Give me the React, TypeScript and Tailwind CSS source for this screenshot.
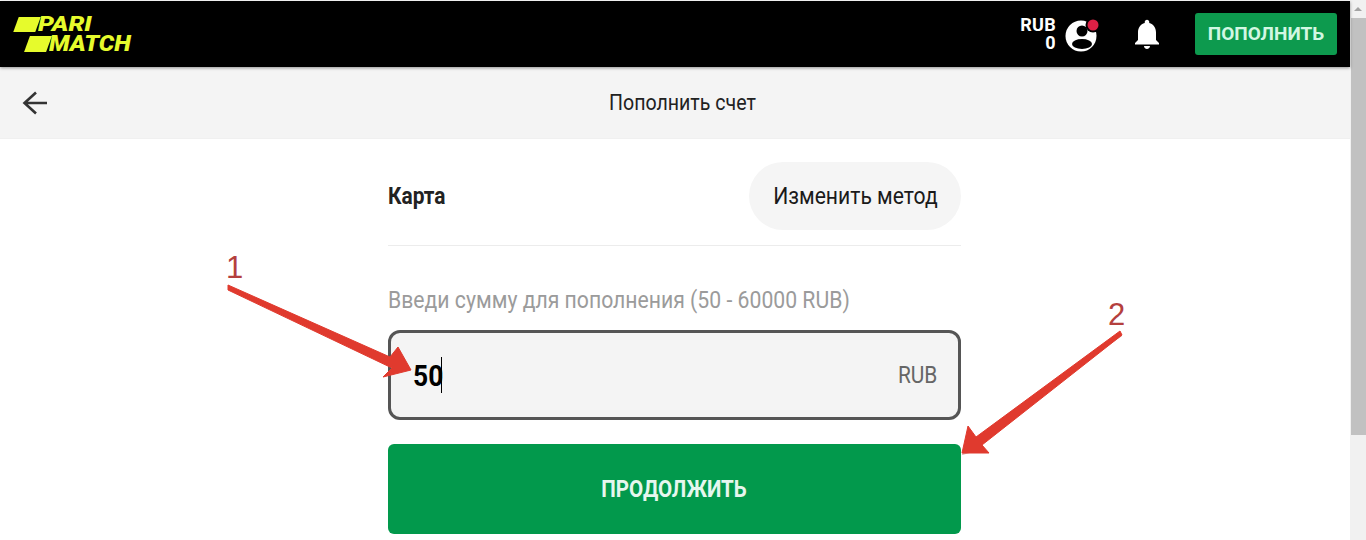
import React from 'react';

const font = { fontFamily: 'Roboto, "Liberation Sans", sans-serif' };

function Logo() {
  return (
    <div className="ml-[3px] flex w-[120px] flex-col gap-[4px] text-[#e6fb2c] italic font-black">
      <div className="flex h-[15px] items-center">
        <div className="h-[15px] w-[22px] shrink-0 -skew-x-[20deg] bg-[#e6fb2c]" />
        <span className="block origin-left scale-x-[1.2] text-[21px] leading-[15px]">PARI</span>
      </div>
      <div className="ml-[11px] flex h-[16px] items-center">
        <div className="h-[16px] w-[22px] shrink-0 -skew-x-[20deg] bg-[#e6fb2c]" />
        <span className="block origin-left scale-x-[1.1] text-[22px] leading-[16px]">MATCH</span>
      </div>
    </div>
  );
}

function UserIcon() {
  return (
    <svg width="36" height="36" viewBox="0 0 36 36" className="shrink-0">
      <circle cx="16" cy="20" r="15.5" fill="#fff" />
      <circle cx="17" cy="15" r="5.5" fill="#000" />
      <ellipse cx="17" cy="28" rx="10" ry="5" fill="#000" />
      <circle cx="28" cy="9" r="7.5" fill="#000" />
      <circle cx="28" cy="9" r="5.5" fill="#dc2045" />
    </svg>
  );
}

function BellIcon() {
  return (
    <svg width="36" height="36" viewBox="0 0 24 24" fill="#fff" className="shrink-0">
      <path d="M12 22c1.1 0 2-.9 2-2h-4c0 1.1.89 2 2 2zm6-6v-5c0-3.07-1.64-5.64-4.5-6.32V4c0-.83-.67-1.5-1.5-1.5s-1.5.67-1.5 1.5v.68C7.63 5.36 6 7.92 6 11v5l-2 2v1h16v-1l-2-2z" />
    </svg>
  );
}

function Scrollbar() {
  return (
    <div className="flex h-full w-4 shrink-0 flex-col bg-[#f1f1f1]">
      <div className="flex h-[18px] items-center justify-center">
        <div className="h-0 w-0 border-x-[4px] border-b-[4px] border-x-transparent border-b-[#a3a3a3]" />
      </div>
      <div className="mx-auto h-[417px] w-[15px] bg-[#c1c1c1]" />
    </div>
  );
}

export default function App() {
  return (
    <div className="relative flex h-[540px] w-[1366px] overflow-hidden bg-white" style={font}>
      <div className="flex min-w-0 flex-1 flex-col">
        {/* шапка */}
        <header className="relative z-10 mt-px flex h-[66px] shrink-0 items-center bg-black pl-[13px] pr-[13px] shadow-[0_1px_3px_rgba(0,0,0,0.4)]">
          <Logo />
          <div className="ml-auto flex flex-col items-end text-[18px] font-bold leading-[18px] tracking-[0.3px] text-white">
            <span>RUB</span>
            <span>0</span>
          </div>
          <div className="ml-[9px]">
            <UserIcon />
          </div>
          <div className="ml-[28px]">
            <BellIcon />
          </div>
          <button className="ml-[30px] flex h-[42px] w-[142px] items-center justify-center rounded-[3px] bg-[#0d9a4e] text-[19px] font-bold text-[#d2f7e2]">
            ПОПОЛНИТЬ
          </button>
        </header>

        {/* заголовок страницы */}
        <div className="flex h-[72px] shrink-0 items-center border-b border-[#f0f0f0] bg-[#f4f4f4] pl-[22px]">
          <svg width="26" height="24" viewBox="0 0 26 24" fill="none" stroke="#333" strokeWidth="2.6" className="shrink-0">
            <path d="M25 12H3M14 1.5 2.5 12 14 22.5" />
          </svg>
          <h1 className="ml-[561px] origin-left scale-x-[0.89] whitespace-nowrap text-[22px] font-normal text-[#222]">Пополнить счет</h1>
        </div>

        <main className="ml-[388px] flex w-[573px] flex-col">
          <div className="flex items-center justify-between border-b border-[#ececec] pb-[15px] pt-[23px]">
            <span className="origin-left scale-x-[0.87] text-[24px] font-bold text-[#222]">Карта</span>
            <button className="flex h-[68px] w-[212px] items-center justify-center rounded-full bg-[#f5f5f5] text-[24px] text-[#1a1a1a]">
              <span className="scale-x-[0.88] whitespace-nowrap">Изменить метод</span>
            </button>
          </div>

          <label className="mt-[39px] origin-left scale-x-[0.883] whitespace-nowrap text-[24px] leading-[30px] text-[#9b9b9b]">
            Введи сумму для пополнения (50 - 60000 RUB)
          </label>

          <div className="mt-[15px] flex h-[90px] items-center rounded-[12px] border-[3px] border-[#555] bg-[#f4f4f4] pl-[22px] pr-[21px]">
            <span className="w-[28px] origin-left scale-x-[0.88] whitespace-nowrap text-[30px] font-bold text-black">50</span>
            <span className="h-[36px] w-px bg-black" />
            <span className="ml-auto origin-right scale-x-[0.87] text-[24px] text-[#666]">RUB</span>
          </div>

          <button className="mt-[24px] flex h-[90px] items-center justify-center rounded-[6px] bg-[#02994c] text-[24px] font-bold text-[#e6f7ee]">
            <span className="scale-x-[0.855] whitespace-nowrap">ПРОДОЛЖИТЬ</span>
          </button>
        </main>
      </div>

      <Scrollbar />

      {/* пометки поверх скриншота */}
      <svg width="1366" height="540" className="pointer-events-none absolute left-0 top-0">
        <polygon points="1120,334 978,441 985,449 962,455 969,429 976,438 1122,336" fill="#b4403e" opacity="0.5" />
        <polygon points="228,285 390,357 398,347 411,370 383,377 392,368 228,290" fill="#e03a2e" stroke="#e03a2e" strokeLinejoin="round" />
        <polygon points="1120,331 976,437 968,426 962,453 989,453 982,445 1122,335" fill="#e03a2e" stroke="#e03a2e" strokeLinejoin="round" />
      </svg>
      <span className="absolute left-[226px] top-[250px] text-[31px] leading-[36px] text-[#b4403e]" style={{ fontFamily: '"Liberation Sans", sans-serif' }}>1</span>
      <span className="absolute left-[1108px] top-[297px] text-[31px] leading-[36px] text-[#b4403e]" style={{ fontFamily: '"Liberation Sans", sans-serif' }}>2</span>
    </div>
  );
}
